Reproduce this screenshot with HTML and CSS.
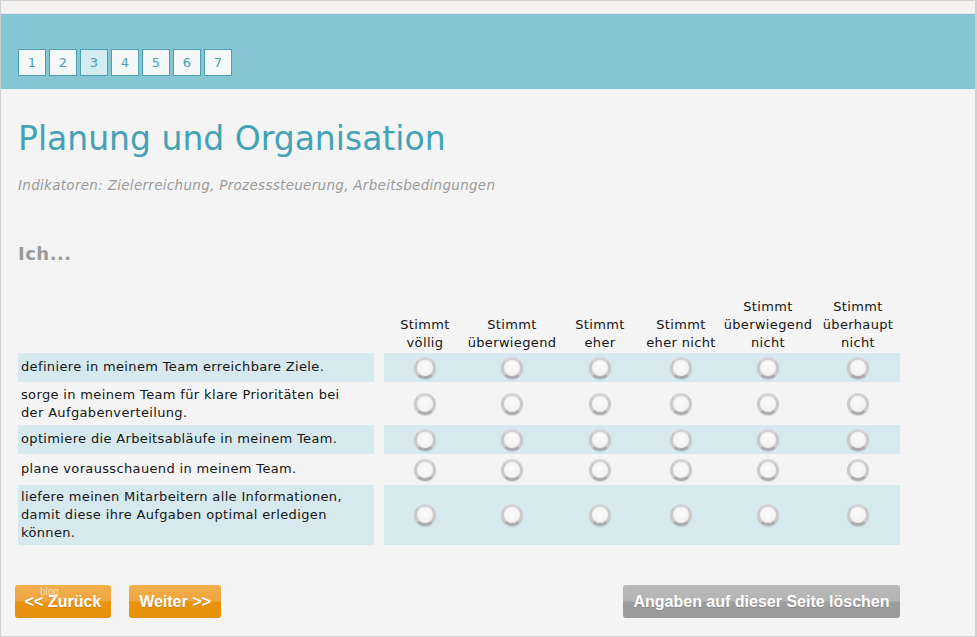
FILE: index.html
```html
<!DOCTYPE html>
<html lang="de">
<head>
<meta charset="utf-8">
<title>Planung und Organisation</title>
<link rel="stylesheet" href="styles.css">
</head>
<body>
<div class="frame">
  <div class="topstrip"></div>
  <div class="band">
    <nav class="pages">
      <a class="page">1</a>
      <a class="page">2</a>
      <a class="page active">3</a>
      <a class="page">4</a>
      <a class="page">5</a>
      <a class="page">6</a>
      <a class="page">7</a>
    </nav>
  </div>
  <main class="content">
    <h1 class="title">Planung und Organisation</h1>
    <p class="subtitle">Indikatoren: Zielerreichung, Prozesssteuerung, Arbeitsbedingungen</p>
    <h2 class="lead">Ich...</h2>

    <div class="grid">
      <div class="row head">
        <div class="q"></div>
        <div class="opts">
          <div class="opt c1">Stimmt<br>völlig</div>
          <div class="opt c2">Stimmt<br>überwiegend</div>
          <div class="opt c3">Stimmt<br>eher</div>
          <div class="opt c4">Stimmt<br>eher nicht</div>
          <div class="opt c5">Stimmt<br>überwiegend<br>nicht</div>
          <div class="opt c6">Stimmt<br>überhaupt<br>nicht</div>
        </div>
      </div>

      <div class="row shade r1">
        <div class="q">definiere in meinem Team erreichbare Ziele.</div>
        <div class="opts">
          <label class="opt c1"><input type="radio" name="q1"></label>
          <label class="opt c2"><input type="radio" name="q1"></label>
          <label class="opt c3"><input type="radio" name="q1"></label>
          <label class="opt c4"><input type="radio" name="q1"></label>
          <label class="opt c5"><input type="radio" name="q1"></label>
          <label class="opt c6"><input type="radio" name="q1"></label>
        </div>
      </div>

      <div class="row r2">
        <div class="q">sorge in meinem Team für klare Prioritäten bei der Aufgabenverteilung.</div>
        <div class="opts">
          <label class="opt c1"><input type="radio" name="q2"></label>
          <label class="opt c2"><input type="radio" name="q2"></label>
          <label class="opt c3"><input type="radio" name="q2"></label>
          <label class="opt c4"><input type="radio" name="q2"></label>
          <label class="opt c5"><input type="radio" name="q2"></label>
          <label class="opt c6"><input type="radio" name="q2"></label>
        </div>
      </div>

      <div class="row shade r3">
        <div class="q">optimiere die Arbeitsabläufe in meinem Team.</div>
        <div class="opts">
          <label class="opt c1"><input type="radio" name="q3"></label>
          <label class="opt c2"><input type="radio" name="q3"></label>
          <label class="opt c3"><input type="radio" name="q3"></label>
          <label class="opt c4"><input type="radio" name="q3"></label>
          <label class="opt c5"><input type="radio" name="q3"></label>
          <label class="opt c6"><input type="radio" name="q3"></label>
        </div>
      </div>

      <div class="row r4">
        <div class="q">plane vorausschauend in meinem Team.</div>
        <div class="opts">
          <label class="opt c1"><input type="radio" name="q4"></label>
          <label class="opt c2"><input type="radio" name="q4"></label>
          <label class="opt c3"><input type="radio" name="q4"></label>
          <label class="opt c4"><input type="radio" name="q4"></label>
          <label class="opt c5"><input type="radio" name="q4"></label>
          <label class="opt c6"><input type="radio" name="q4"></label>
        </div>
      </div>

      <div class="row shade r5">
        <div class="q">liefere meinen Mitarbeitern alle Informationen, damit diese ihre Aufgaben optimal erledigen können.</div>
        <div class="opts">
          <label class="opt c1"><input type="radio" name="q5"></label>
          <label class="opt c2"><input type="radio" name="q5"></label>
          <label class="opt c3"><input type="radio" name="q5"></label>
          <label class="opt c4"><input type="radio" name="q5"></label>
          <label class="opt c5"><input type="radio" name="q5"></label>
          <label class="opt c6"><input type="radio" name="q5"></label>
        </div>
      </div>
    </div>

    <div class="actions">
      <button class="btn orange back"><span class="blog">blog</span>&lt;&lt; Zurück</button>
      <button class="btn orange next">Weiter &gt;&gt;</button>
      <button class="btn gray clear">Angaben auf dieser Seite löschen</button>
    </div>
  </main>
</div>
</body>
</html>
```
FILE: styles.css
```css
html, body {
  margin: 0;
  padding: 0;
}
body {
  font-family: "DejaVu Sans", Verdana, sans-serif;
  background: #f4f4f4;
}
.frame {
  box-sizing: border-box;
  width: 977px;
  height: 637px;
  border: 1px solid #cfcfcf;
  border-right-width: 2px;
  background: #f4f4f4;
  overflow: hidden;
}
.topstrip {
  height: 12px;
  background: #f3f2f1;
  border-bottom: 1px solid #ebe8e6;
}
.band {
  height: 75px;
  background: #86c6d2;
  box-sizing: border-box;
  padding: 35px 0 0 17px;
}
.pages {
  display: flex;
  gap: 3px;
}
.page {
  box-sizing: border-box;
  width: 28px;
  height: 27px;
  border: 1px solid #4aa0b2;
  background: #f4f8f9;
  color: #4aa0b2;
  font-size: 13px;
  line-height: 25px;
  text-align: center;
}
.page.active {
  background: #d2ecf1;
}
.content {
  padding: 0 0 0 17px;
}
.title {
  margin: 30px 0 0;
  font-size: 33px;
  line-height: 40px;
  font-weight: normal;
  color: #44a2b4;
}
.subtitle {
  margin: 17px 0 0;
  font-size: 13.5px;
  letter-spacing: 0.3px;
  line-height: 18px;
  font-style: italic;
  color: #9a9a9a;
}
.lead {
  margin: 49px 0 0;
  font-size: 18px;
  letter-spacing: 0.5px;
  line-height: 22px;
  font-weight: bold;
  color: #9a9a9a;
}
.grid {
  margin-top: 33px;
  width: 883px;
  font-size: 13px;
  letter-spacing: 0.35px;
  line-height: 18px;
  color: #151515;
}
.row {
  display: flex;
}
.q {
  box-sizing: border-box;
  width: 356px;
  padding: 5px 8px 5px 3px;
}
.opts {
  display: flex;
  margin-left: 10px;
}
.opt {
  display: flex;
  align-items: center;
  justify-content: center;
  text-align: center;
}
.c1 { width: 82px; }
.c2 { width: 92px; }
.c3 { width: 84px; }
.c4 { width: 78px; }
.c5 { width: 96px; }
.c6 { width: 84px; }
.head .opt {
  align-items: flex-end;
  padding-bottom: 1px;
}
.shade .q,
.shade .opts {
  background: #d5e9ee;
}
.r1 .q, .r3 .q { height: 29px; }
.r2 .q { height: 43px; padding-top: 4px; }
.r4 .q { height: 31px; padding-top: 6px; }
.r5 .q { height: 60px; padding-top: 3px; }
.r2 .opt, .r4 .opt { padding-top: 1px; }

input[type="radio"] {
  appearance: none;
  -webkit-appearance: none;
  box-sizing: border-box;
  width: 22px;
  height: 22px;
  margin: 0;
  border-radius: 50%;
  border: 3px solid #c9c9c9;
  border-bottom-color: #acacac;
  border-top-color: #d4d4d4;
  background: radial-gradient(circle at 50% 40%, #fbfbfb 0%, #f2f2f2 70%, #e6e6e6 100%);
  box-shadow: 0 1px 1px rgba(0,0,0,0.12);
}

.actions {
  display: flex;
  margin: 40px 0 0 -3px;
  width: 885px;
}
.btn {
  position: relative;
  box-sizing: border-box;
  height: 33px;
  border: none;
  border-radius: 3px;
  padding: 0;
  font-family: "Liberation Sans", Arial, sans-serif;
  font-size: 16px;
  font-weight: bold;
  color: #fff;
  text-shadow: 0 1px 1px rgba(0,0,0,0.15);
}
.orange {
  background: linear-gradient(#f1ae4c 0%, #eea641 48%, #e9930f 52%, #e8900b 100%);
}
.gray {
  background: linear-gradient(#bababa 0%, #b4b4b4 48%, #9d9d9d 52%, #9a9a9a 100%);
}
.back { width: 96px; }
.next { width: 92px; margin-left: 18px; }
.clear { width: 277px; margin-left: auto; }
.blog {
  position: absolute;
  left: 25px;
  top: 1px;
  font-size: 10px;
  font-weight: normal;
  color: #f7dcae;
  text-shadow: none;
}
```
